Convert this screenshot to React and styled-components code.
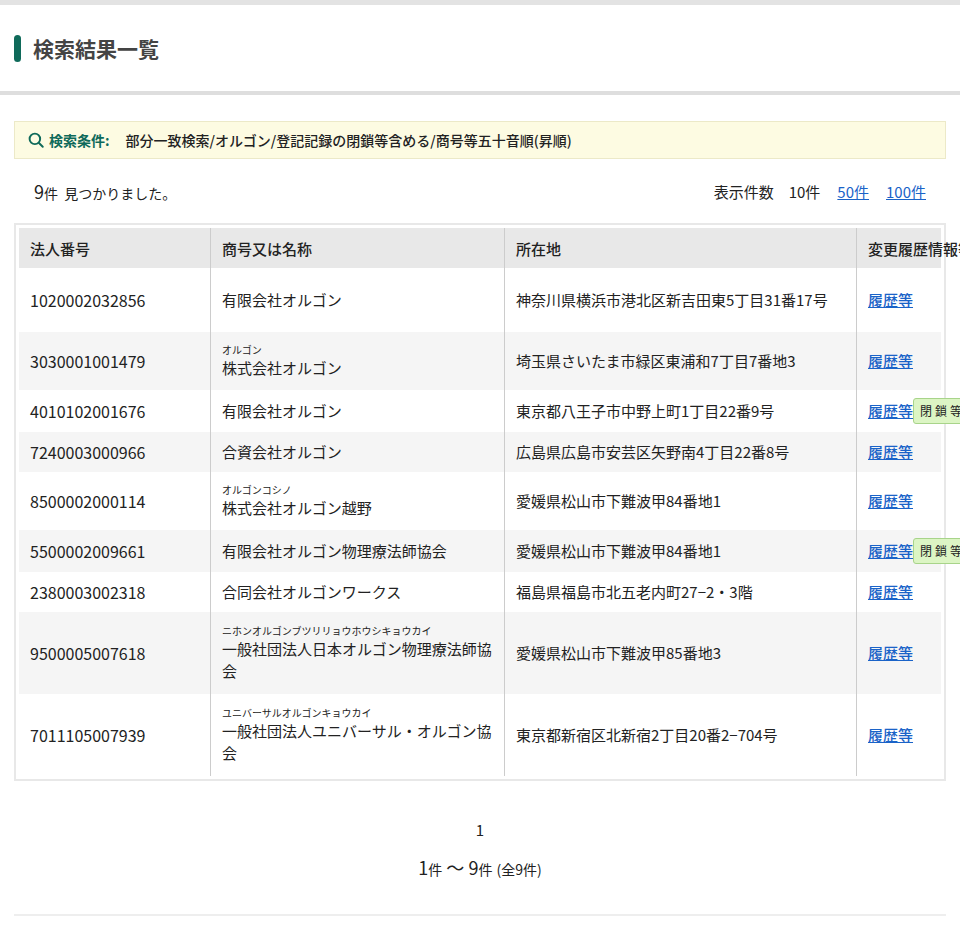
import React from "react";
import styled, { createGlobalStyle } from "styled-components";

const G = createGlobalStyle`
body{margin:0;background:#fff;font-family:"Noto Sans CJK JP","Noto Sans",sans-serif;color:#222;}
`;
const Page = styled.div`border-top:5px solid #e3e3e3;`;
const Head = styled.div`height:86px;display:flex;align-items:center;padding-left:14px;border-bottom:4px solid #dedede;`;
const Bar = styled.span`width:7px;height:27px;border-radius:4px;background:#0f6a5a;margin-right:12px;`;
const H1 = styled.h1`margin:0;font-size:21px;font-weight:700;color:#444;`;
const Main = styled.div`padding:26px 14px 0;`;
const Cond = styled.div`height:36px;background:#fdfbe2;border:1px solid #ece9c8;display:flex;align-items:center;padding-left:12px;font-size:14px;font-weight:500;`;
const CondLabel = styled.span`color:#0f6a5a;font-weight:700;margin:0 16px 0 4px;`;
const Info = styled.div`display:flex;justify-content:space-between;align-items:center;height:64px;padding:0 20px 0 20px;font-size:14px;`;
const Big = styled.span`font-size:18px;`;
const Links = styled.div`display:flex;gap:17px;font-size:15px;a{color:#1a63c8;}`;
const Box = styled.div`border:2px solid #e8e8e8;padding:3px;`;
const Table = styled.table`width:100%;border-collapse:collapse;font-size:15px;table-layout:fixed;`;
const Th = styled.th`background:#e8e8e8;text-align:left;font-weight:500;height:40px;padding:0 11px;border-left:${p=>p.first?"none":"1px solid #ccc"};width:${p=>p.w?p.w+"px":"auto"};white-space:nowrap;`;
const Tr = styled.tr`background:${p=>p.alt?"#f5f5f5":"#fff"};`;
const Td = styled.td`padding:0 11px;border-left:${p=>p.first?"none":"1px solid #ccc"};line-height:22px;vertical-align:middle;font-size:${p=>p.num?"16px":"15px"};`;
const Kana = styled.div`font-size:10px;line-height:14px;`;
const Link = styled.a`color:#1a63c8;text-decoration:underline;font-weight:500;white-space:nowrap;`;
const Cell = styled.div`display:flex;align-items:center;justify-content:space-between;`;
const Tag = styled.span`background:#dcf5c4;border:1px solid #a8d48a;border-radius:3px;font-size:12px;padding:1px 4px 1px 6px;letter-spacing:3px;white-space:nowrap;`;
const Pager = styled.div`text-align:center;padding-top:38px;font-size:15px;`;
const Count = styled.div`text-align:center;font-size:18px;margin-top:14px;padding-bottom:34px;border-bottom:2px solid #eee;small{font-size:14px;}`;

const rows=[
["1020002032856","","有限会社オルゴン","神奈川県横浜市港北区新吉田東5丁目31番17号",0,64],
["3030001001479","オルゴン","株式会社オルゴン","埼玉県さいたま市緑区東浦和7丁目7番地3",0,58],
["4010102001676","","有限会社オルゴン","東京都八王子市中野上町1丁目22番9号",1,42],
["7240003000966","","合資会社オルゴン","広島県広島市安芸区矢野南4丁目22番8号",0,40],
["8500002000114","オルゴンコシノ","株式会社オルゴン越野","愛媛県松山市下難波甲84番地1",0,58],
["5500002009661","","有限会社オルゴン物理療法師協会","愛媛県松山市下難波甲84番地1",1,42],
["2380003002318","","合同会社オルゴンワークス","福島県福島市北五老内町27−2・3階",0,40],
["9500005007618","ニホンオルゴンブツリリョウホウシキョウカイ","一般社団法人日本オルゴン物理療法師協会","愛媛県松山市下難波甲85番地3",0,82],
["7011105007939","ユニバーサルオルゴンキョウカイ","一般社団法人ユニバーサル・オルゴン協会","東京都新宿区北新宿2丁目20番2−704号",0,82],
];

export default function App(){return(<Page><G/>
<Head><Bar/><H1>検索結果一覧</H1></Head>
<Main>
<Cond><svg width="18" height="18" viewBox="0 0 24 24" fill="none" stroke="#0f6a5a" strokeWidth="2.6" strokeLinecap="round"><circle cx="10.5" cy="10.5" r="7"/><path d="M16 16l5 5"/></svg><CondLabel>検索条件:</CondLabel>部分一致検索/オルゴン/登記記録の閉鎖等含める/商号等五十音順(昇順)</Cond>
<Info><div><Big>9</Big>件&nbsp; 見つかりました。</div><Links><span style={{color:"#222"}}>表示件数　10件</span><a href="#">50件</a><a href="#">100件</a></Links></Info>
<Box><Table><thead><tr><Th first w={169}>法人番号</Th><Th w={271}>商号又は名称</Th><Th w={329}>所在地</Th><Th>変更履歴情報等</Th></tr></thead>
<tbody>{rows.map((r,i)=>(<Tr key={i} alt={i%2===1} style={{height:r[5]}}>
<Td first num>{r[0]}</Td><Td>{r[1]&&<Kana>{r[1]}</Kana>}{r[2]}</Td><Td>{r[3]}</Td>
<Td><Cell><Link href="#">履歴等</Link>{r[4]?<Tag>閉鎖等</Tag>:null}</Cell></Td></Tr>))}</tbody></Table></Box>
<Pager>1</Pager>
<Count>1<small>件</small> ～ 9<small>件</small> <small>(全9件)</small></Count>
</Main></Page>);}
